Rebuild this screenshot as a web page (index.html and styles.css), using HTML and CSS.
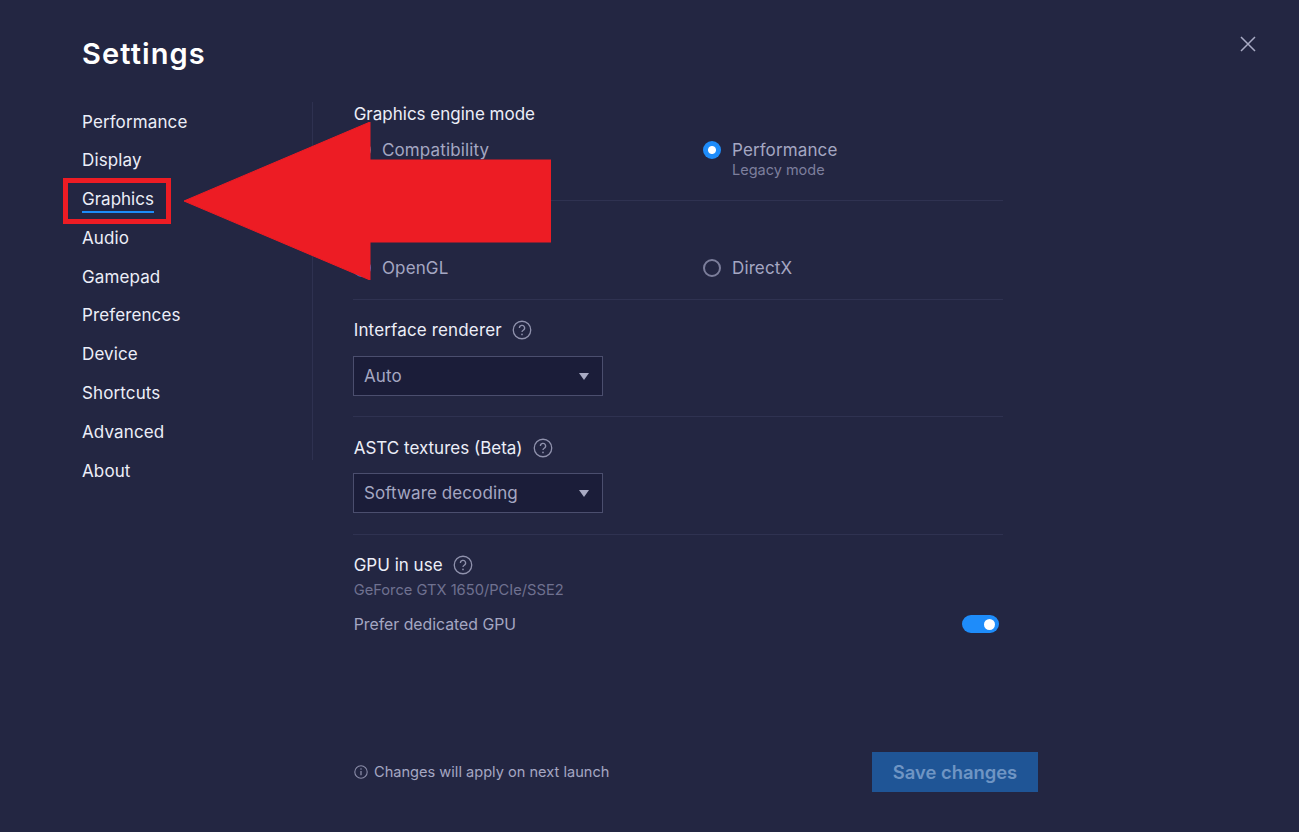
FILE: index.html
```html
<!DOCTYPE html>
<html lang="en">
<head>
<meta charset="utf-8">
<title>Settings</title>
<link rel="stylesheet" href="styles.css">
</head>
<body>
<div class="page">
  <header class="header">
    <h1 class="title">Settings</h1>
    <svg class="close" width="18" height="18" viewBox="0 0 18 18"><path d="M2 2 16 16M16 2 2 16" stroke="#a9abc4" stroke-width="1.5" fill="none"/></svg>
  </header>
  <div class="body">
    <nav class="nav">
      <a class="nav-item">Performance</a>
      <a class="nav-item">Display</a>
      <a class="nav-item active"><span class="nav-text">Graphics</span></a>
      <a class="nav-item">Audio</a>
      <a class="nav-item">Gamepad</a>
      <a class="nav-item">Preferences</a>
      <a class="nav-item">Device</a>
      <a class="nav-item">Shortcuts</a>
      <a class="nav-item">Advanced</a>
      <a class="nav-item">About</a>
    </nav>
    <main class="main">
      <section class="section s1">
        <div class="label">Graphics engine mode</div>
        <div class="radios">
          <div class="radio-col"><div class="radio-row"><span class="radio"></span><span class="radio-text">Compatibility</span></div></div>
          <div class="radio-col"><div class="radio-row"><span class="radio on"></span><span class="radio-text">Performance</span></div><div class="radio-sub">Legacy mode</div></div>
        </div>
      </section>
      <section class="section s2">
        <div class="label">Graphics renderer <svg class="help" width="20" height="20" viewBox="0 0 20 20"><circle cx="10" cy="10" r="8.75" fill="none" stroke="#9092ad" stroke-width="1.3"/><path d="M7.4 8a2.6 2.6 0 1 1 3.9 2.2c-.9.5-1.3 1-1.3 1.9" fill="none" stroke="#9092ad" stroke-width="1.3"/><circle cx="10" cy="14.4" r=".85" fill="#9092ad"/></svg></div>
        <div class="radios">
          <div class="radio-col"><div class="radio-row"><span class="radio on"></span><span class="radio-text">OpenGL</span></div></div>
          <div class="radio-col"><div class="radio-row"><span class="radio"></span><span class="radio-text">DirectX</span></div></div>
        </div>
      </section>
      <section class="section s3">
        <div class="label label-wide">Interface renderer <svg class="help" width="20" height="20" viewBox="0 0 20 20"><circle cx="10" cy="10" r="8.75" fill="none" stroke="#9092ad" stroke-width="1.3"/><path d="M7.4 8a2.6 2.6 0 1 1 3.9 2.2c-.9.5-1.3 1-1.3 1.9" fill="none" stroke="#9092ad" stroke-width="1.3"/><circle cx="10" cy="14.4" r=".85" fill="#9092ad"/></svg></div>
        <div class="select"><span>Auto</span><span class="caret"></span></div>
      </section>
      <section class="section s4">
        <div class="label">ASTC textures (Beta) <svg class="help" width="20" height="20" viewBox="0 0 20 20"><circle cx="10" cy="10" r="8.75" fill="none" stroke="#9092ad" stroke-width="1.3"/><path d="M7.4 8a2.6 2.6 0 1 1 3.9 2.2c-.9.5-1.3 1-1.3 1.9" fill="none" stroke="#9092ad" stroke-width="1.3"/><circle cx="10" cy="14.4" r=".85" fill="#9092ad"/></svg></div>
        <div class="select"><span>Software decoding</span><span class="caret"></span></div>
      </section>
      <section class="section s5">
        <div class="label">GPU in use <svg class="help" width="20" height="20" viewBox="0 0 20 20"><circle cx="10" cy="10" r="8.75" fill="none" stroke="#9092ad" stroke-width="1.3"/><path d="M7.4 8a2.6 2.6 0 1 1 3.9 2.2c-.9.5-1.3 1-1.3 1.9" fill="none" stroke="#9092ad" stroke-width="1.3"/><circle cx="10" cy="14.4" r=".85" fill="#9092ad"/></svg></div>
        <div class="gpu">GeForce GTX 1650/PCIe/SSE2</div>
        <div class="prefer"><span>Prefer dedicated GPU</span><span class="toggle"><span class="knob"></span></span></div>
      </section>
      <footer class="footer">
        <div class="note"><svg width="14" height="14" viewBox="0 0 14 14"><circle cx="7" cy="7" r="6.2" fill="none" stroke="#8a8ca8" stroke-width="1.1"/><path d="M7 6v4.2" stroke="#8a8ca8" stroke-width="1.3"/><circle cx="7" cy="4" r=".8" fill="#8a8ca8"/></svg><span>Changes will apply on next launch</span></div>
        <button class="save">Save changes</button>
      </footer>
    </main>
  </div>
  <div class="highlight"></div>
  <svg class="arrow" width="368" height="158" viewBox="0 0 368 158"><path d="M1 79 187 0V38H368V120H187V158Z" fill="#ed1c24" stroke="#ed1c24" stroke-width="1" stroke-linejoin="round"/></svg>
</div>
</body>
</html>
```
FILE: styles.css
```css
* { box-sizing: border-box; }
html, body { margin: 0; height: 100%; }
body { background: #232642; color: #eceef8; font-family: Inter, "Liberation Sans", sans-serif; font-size: 16px; overflow: hidden; }
.page { position: relative; width: 1299px; height: 832px; display: flex; flex-direction: column; }
.header { height: 102px; padding: 0 42px 0 82px; display: flex; justify-content: space-between; align-items: flex-start; flex: none; }
.title { margin: 33px 0 0; font-size: 29px; line-height: 42px; font-weight: 600; color: #fff; letter-spacing: 1.1px; }
.close { margin-top: 35px; }
.body { flex: 1; display: flex; min-height: 0; }
.nav { width: 313px; height: 358px; padding: 0.5px 0 0 82px; border-right: 1px solid #2e3150; flex: none; display: flex; flex-direction: column; }
.nav-item { height: 38.8px; flex: none; line-height: 38.8px; color: #eceef8; font-size: 17px; letter-spacing: .12px; }
.nav-text { display: inline-block; line-height: 21px; border-bottom: 2px solid #1d8cf8; padding-bottom: 1px; letter-spacing: 0; }
.main { width: 685px; margin-left: 40px; display: flex; flex-direction: column; height: 730px; padding-bottom: 40px; flex: none; }
.section { width: 650px; border-bottom: 1px solid #2f3251; flex: none; }
.s1 { height: 99px; }
.s2 { height: 99px; padding-top: 19px; }
.s3 { height: 117px; padding-top: 18px; }
.s4 { height: 118px; padding-top: 19px; }
.s5 { border-bottom: 0; padding-top: 18px; }
.label { display: flex; align-items: center; gap: 10px; height: 24px; padding-left: .7px; font-size: 17px; color: #eceef8; }
.label-wide { letter-spacing: .15px; }
.radios { display: flex; margin-top: 12px; }
.radio-col { width: 350px; flex: none; }
.radio-row { display: flex; align-items: center; height: 24px; gap: 11px; }
.radio { width: 18px; height: 18px; border: 2px solid #7c7e9b; border-radius: 50%; flex: none; }
.radio.on { border: 0; background: radial-gradient(circle, #fff 0 3.5px, #1e8cfa 4.5px); }
.radio-text { color: #a5a7c2; font-size: 17px; letter-spacing: .12px; }
.radio-sub { margin: -1px 0 0 29px; line-height: 18px; font-size: 14.5px; color: #7d7f9d; }
.select { width: 250px; height: 40px; margin-top: 14px; padding: 0 13px 0 10px; border: 1px solid #4b4e6e; background: #1b1d39; display: flex; justify-content: space-between; align-items: center; color: #a5a7c2; font-size: 17px; letter-spacing: .1px; }
.s4 .select { margin-top: 13px; }
.caret { width: 0; height: 0; border-left: 5.5px solid transparent; border-right: 5.5px solid transparent; border-top: 7px solid #a9abc4; }
.gpu { margin-top: 3px; padding-left: .7px; line-height: 20px; font-size: 14.7px; color: #6f7190; }
.prefer { margin-top: 12px; height: 24px; display: flex; justify-content: space-between; align-items: center; padding: 0 4px 0 .7px; color: #a5a7c2; font-size: 15.8px; }
.toggle { width: 37px; height: 18px; border-radius: 9px; background: #1e8cfa; display: flex; justify-content: flex-end; align-items: center; padding-right: 4px; }
.knob { width: 11px; height: 11px; border-radius: 50%; background: #fff; }
.footer { margin-top: auto; display: flex; justify-content: space-between; align-items: center; }
.note { display: flex; align-items: center; gap: 6px; padding-left: 1px; font-size: 14.6px; color: #a5a7c2; }
.save { width: 166px; height: 40px; border: 0; padding: 0; background: #1f5596; color: #6f95c4; font: 600 18.4px Inter, "Liberation Sans", sans-serif; }
.highlight { position: absolute; left: 63px; top: 178px; width: 108px; height: 46px; border: 5px solid #ed1c24; }
.arrow { position: absolute; left: 183px; top: 122px; }
```
